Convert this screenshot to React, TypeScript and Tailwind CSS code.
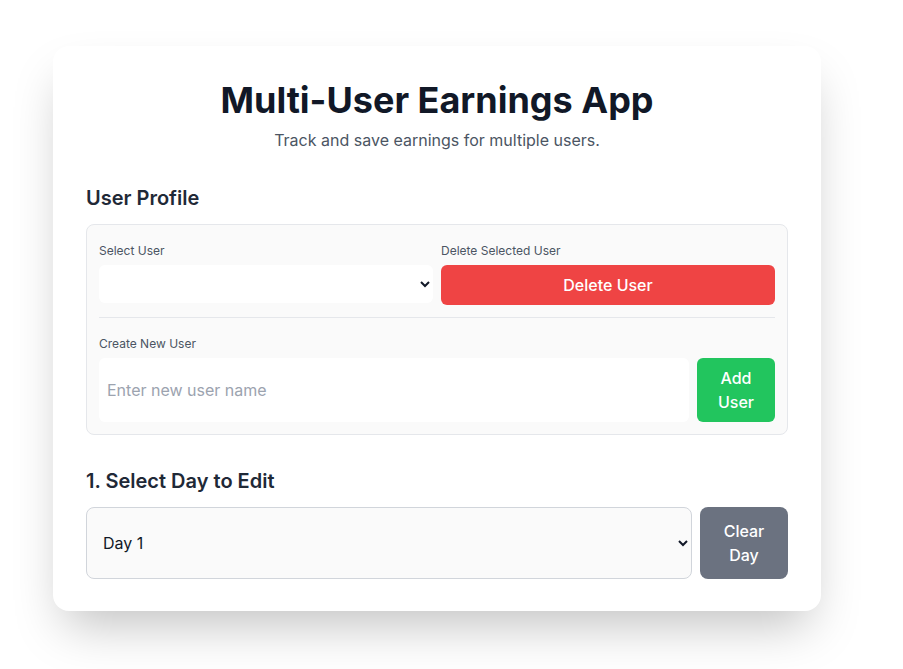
import React, { useState } from "react";

const App: React.FC = () => {
  const [users] = useState<string[]>([]);
  const [selectedUser, setSelectedUser] = useState("");
  const [newUser, setNewUser] = useState("");
  const [day, setDay] = useState("1");

  return (
    <div
      className="min-h-screen bg-white pt-[46px] pl-[53px] pb-10"
      style={{ fontFamily: "Inter, 'Noto Sans', sans-serif" }}
    >
      <div className="w-[768px] rounded-2xl bg-white px-[33px] pt-[34px] pb-8 shadow-2xl">
        {/* Header */}
        <div className="text-center">
          <h1 className="text-4xl font-bold text-[#111827]">
            Multi-User Earnings App
          </h1>
          <p className="mt-2 text-base text-[#4b5563]">
            Track and save earnings for multiple users.
          </p>
        </div>

        {/* User profile */}
        <h2 className="mt-8 mb-3 text-xl font-semibold text-[#1f2937]">
          User Profile
        </h2>
        <div className="rounded-lg border border-[#e5e7eb] bg-[#fafafa] px-3 pt-[18px] pb-3">
          <div className="grid grid-cols-2 gap-2">
            <div className="flex flex-col">
              <label className="mb-[6px] text-xs leading-4 text-[#4b5563]">
                Select User
              </label>
              <select
                value={selectedUser}
                onChange={(e) => setSelectedUser(e.target.value)}
                className="h-[38px] rounded-md bg-white px-2 text-base text-[#111827] outline-none"
              >
                {users.map((u) => (
                  <option key={u} value={u}>
                    {u}
                  </option>
                ))}
              </select>
            </div>
            <div className="flex flex-col">
              <label className="mb-[6px] text-xs leading-4 text-[#4b5563]">
                Delete Selected User
              </label>
              <button className="h-10 rounded-md bg-[#ef4444] text-base font-medium text-white">
                Delete User
              </button>
            </div>
          </div>

          <div className="mt-3 border-t border-[#e5e7eb] pt-[18px]">
            <label className="mb-[6px] block text-xs leading-4 text-[#4b5563]">
              Create New User
            </label>
            <div className="flex gap-2">
              <input
                value={newUser}
                onChange={(e) => setNewUser(e.target.value)}
                placeholder="Enter new user name"
                className="h-16 flex-1 rounded-md bg-white px-2 text-base text-[#111827] outline-none placeholder:text-[#9ca3af]"
              />
              <button className="h-16 w-[78px] rounded-md bg-[#22c55e] text-base font-medium leading-6 text-white">
                Add
                <br />
                User
              </button>
            </div>
          </div>
        </div>

        {/* Day select */}
        <h2 className="mt-8 mb-3 text-xl font-semibold text-[#1f2937]">
          1. Select Day to Edit
        </h2>
        <div className="flex gap-2">
          <select
            value={day}
            onChange={(e) => setDay(e.target.value)}
            className="flex-1 rounded-lg border border-[#d1d5db] bg-[#fafafa] px-3 text-base text-[#111827] outline-none"
          >
            {Array.from({ length: 7 }, (_, i) => (
              <option key={i} value={String(i + 1)}>
                Day {i + 1}
              </option>
            ))}
          </select>
          <button className="w-[88px] rounded-lg bg-[#6b7280] py-3 text-base font-medium leading-6 text-white">
            Clear
            <br />
            Day
          </button>
        </div>
      </div>
    </div>
  );
};

export default App;
